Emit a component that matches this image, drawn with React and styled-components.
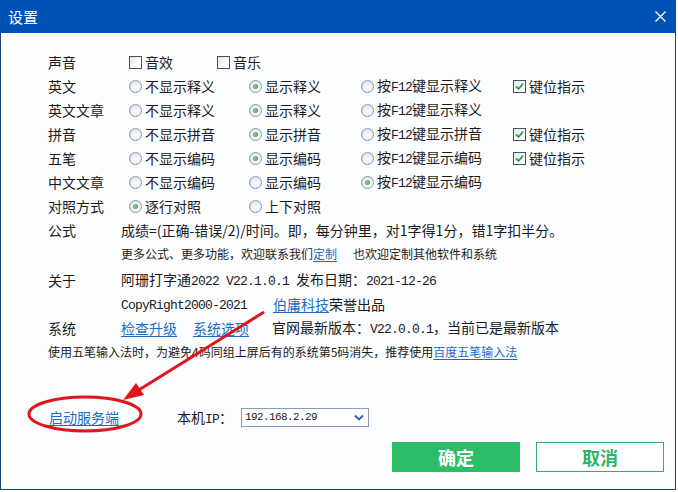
import React from "react";
import styled, { createGlobalStyle } from "styled-components";

const GlobalStyle = createGlobalStyle`
  html, body { margin: 0; padding: 0; background: #ffffff; }
  body { font-family: "Noto Sans CJK SC", "Noto Sans", sans-serif; color: #1b1b1b; }
  * { box-sizing: border-box; }
`;

const Window = styled.div`
  position: relative;
  width: 676px;
  height: 490px;
  border: 1px solid #1d416f;
  border-top: 0;
  background: #fcfdff;
  display: flex;
  flex-direction: column;
`;

const TitleBar = styled.div`
  height: 33px;
  margin: 0 -1px;
  background: #0051b5;
  color: #fff;
  display: flex;
  align-items: center;
  justify-content: space-between;
  padding: 0 10px 0 8px;
  font-size: 15px;
  flex: none;
`;

const Body = styled.div`
  flex: 1;
  padding: 17px 11px 19px 47px;
  display: flex;
  flex-direction: column;
  font-size: 14px;
`;

const Row = styled.div`
  display: flex;
  align-items: center;
  height: 24px;
  line-height: 24px;
  white-space: nowrap;
  margin-top: ${(p) => p.$mt || 0}px;
  font-size: ${(p) => p.$fs || 14}px;
`;

const Label = styled.div`
  width: 73px;
  flex: none;
`;

const Options = styled.div`
  display: flex;
  align-items: center;
  padding-left: 8px;
`;

const Option = styled.div`
  display: inline-flex;
  align-items: center;
  gap: 3px;
  width: ${(p) => (p.$w ? `${p.$w}px` : "auto")};
  flex: none;
`;

const RadioMark = styled.span`
  position: relative;
  width: 13px;
  height: 13px;
  border-radius: 50%;
  border: 1px solid #8496ab;
  background: radial-gradient(circle at 60% 65%, #ffffff 0%, #e9edf2 55%, #cfd7e0 100%);
  flex: none;
  &::after {
    content: "";
    display: ${(p) => (p.$on ? "block" : "none")};
    position: absolute;
    left: 3px;
    top: 3px;
    width: 5px;
    height: 5px;
    border-radius: 50%;
    background: radial-gradient(circle at 40% 40%, #8fd48f, #2f8f36);
  }
`;

const BoxMark = styled.span`
  width: 13px;
  height: 13px;
  border: 1px solid #3d5670;
  background: linear-gradient(135deg, #dfe4ea 0%, #ffffff 70%);
  flex: none;
  display: inline-flex;
  align-items: center;
  justify-content: center;
`;

const Mono = styled.span`
  font-family: "Liberation Mono", "DejaVu Sans Mono", monospace;
  font-size: ${(p) => p.$fs || 13}px;
  letter-spacing: ${(p) => p.$ls ?? -0.8}px;
`;

const Link = styled.span`
  color: #1a6cc4;
  text-decoration: underline;
  text-underline-offset: 2px;
  margin-left: ${(p) => p.$ml || 0}px;
`;

const Cell = styled.span`
  display: inline-block;
  width: ${(p) => p.$w}px;
  flex: none;
`;

const Gap = styled.span`
  display: inline-block;
  width: ${(p) => p.$w}px;
`;

const Footer = styled.div`
  display: flex;
  align-items: center;
  height: 24px;
  margin-top: 41px;
  padding-left: 1px;
  white-space: nowrap;
`;

const IpLabel = styled.span`
  width: 64px;
  flex: none;
`;

const Select = styled.div`
  width: 128px;
  height: 19px;
  border: 1px solid #7f9dbd;
  background: #fff;
  display: flex;
  align-items: center;
  justify-content: space-between;
  padding: 0 4px 0 3px;
`;

const Buttons = styled.div`
  display: flex;
  justify-content: flex-end;
  gap: 16px;
  margin-top: 13px;
`;

const Button = styled.div`
  width: 128px;
  height: 30px;
  display: flex;
  align-items: center;
  justify-content: center;
  font-size: 18px;
  font-weight: 700;
  background: ${(p) => (p.$primary ? "#2dbd69" : "#ffffff")};
  color: ${(p) => (p.$primary ? "#ffffff" : "#2db466")};
  border: 1px solid ${(p) => (p.$primary ? "#2dbd69" : "#3aa66a")};
`;

const Overlay = styled.svg`
  position: absolute;
  left: -1px;
  top: 0;
  pointer-events: none;
`;

const Radio = ({ on, w, children }) => (
  <Option $w={w}>
    <RadioMark $on={on} />
    <span>{children}</span>
  </Option>
);

const Check = ({ on, w, children }) => (
  <Option $w={w}>
    <BoxMark>
      {on && (
        <svg width="9" height="9" viewBox="0 0 9 9">
          <path d="M1 4.5 L3.5 7 L8 1.5" stroke="#2c9a34" strokeWidth="1.8" fill="none" />
        </svg>
      )}
    </BoxMark>
    <span>{children}</span>
  </Option>
);

const rows = [
  ["英文", ["不显示释义", "显示释义", "按F12键显示释义"], 1, true],
  ["英文文章", ["不显示释义", "显示释义", "按F12键显示释义"], 1, false],
  ["拼音", ["不显示拼音", "显示拼音", "按F12键显示拼音"], 1, true],
  ["五笔", ["不显示编码", "显示编码", "按F12键显示编码"], 1, true],
  ["中文文章", ["不显示编码", "显示编码", "按F12键显示编码"], 2, false],
];

const widths = [120, 112, 152];

export default function App() {
  return (
    <>
      <GlobalStyle />
      <Window>
        <TitleBar>
          <span>设置</span>
          <svg width="11" height="11" viewBox="0 0 11 11">
            <path d="M0.5 0.5 L10.5 10.5 M10.5 0.5 L0.5 10.5" stroke="#fff" strokeWidth="1.3" />
          </svg>
        </TitleBar>
        <Body>
          <Row>
            <Label>声音</Label>
            <Options>
              <Check w={88}>音效</Check>
              <Check>音乐</Check>
            </Options>
          </Row>
          {rows.map(([label, opts, sel, key]) => (
            <Row key={label}>
              <Label>{label}</Label>
              <Options>
                {opts.map((o, i) => (
                  <Radio key={i} on={i === sel} w={widths[i]}>
                    {o.startsWith("按F12") ? (
                      <>
                        按<Mono>F12</Mono>
                        {o.slice(4)}
                      </>
                    ) : (
                      o
                    )}
                  </Radio>
                ))}
                {key && <Check on>键位指示</Check>}
              </Options>
            </Row>
          ))}
          <Row>
            <Label>对照方式</Label>
            <Options>
              <Radio on w={120}>逐行对照</Radio>
              <Radio>上下对照</Radio>
            </Options>
          </Row>
          <Row>
            <Label>公式</Label>
            <span>成绩=(正确-错误/2)/时间。即，每分钟里，对1字得1分，错1字扣半分。</span>
          </Row>
          <Row $fs={12}>
            <Label />
            <span>更多公式、更多功能，欢迎联系我们</span>
            <Link>定制</Link>
            <Gap $w={16} />
            <span>也欢迎定制其他软件和系统</span>
          </Row>
          <Row $mt={2}>
            <Label>关于</Label>
            <span>
              阿珊打字通<Mono>2022 V22.1.0.1 </Mono>发布日期：<Mono>2021-12-26</Mono>
            </span>
          </Row>
          <Row>
            <Label />
            <Cell $w={152}>
              <Mono>CopyRight2000-2021</Mono>
            </Cell>
            <Link>伯庸科技</Link>
            <span>荣誉出品</span>
          </Row>
          <Row>
            <Label>系统</Label>
            <Link>检查升级</Link>
            <Link $ml={16}>系统选项</Link>
            <Gap $w={23} />
            <span>
              官网最新版本：<Mono>V22.0.0.1</Mono>，当前已是最新版本
            </span>
          </Row>
          <Row $fs={12}>
            <span>使用五笔输入法时，为避免4码同组上屏后有的系统第5码消失，推荐使用</span>
            <Link>百度五笔输入法</Link>
          </Row>
          <Footer>
            <Cell $w={128}>
              <Link>启动服务端</Link>
            </Cell>
            <IpLabel>
              本机<Mono>IP</Mono>：
            </IpLabel>
            <Select>
              <Mono $fs={11} $ls={-0.6}>192.168.2.29</Mono>
              <svg width="10" height="7" viewBox="0 0 10 7">
                <path d="M1 1.5 L5 5.5 L9 1.5" stroke="#2d5fa6" strokeWidth="1.8" fill="none" />
              </svg>
            </Select>
          </Footer>
          <Buttons>
            <Button $primary>确定</Button>
            <Button>取消</Button>
          </Buttons>
        </Body>
        <Overlay width="678" height="492" viewBox="0 0 678 492">
          <ellipse cx="85" cy="414" rx="56" ry="17" fill="none" stroke="#e3151c" strokeWidth="3" />
          <line x1="264" y1="312" x2="134" y2="393" stroke="#e3151c" strokeWidth="3" />
          <polygon points="123,400 144,395 136,383" fill="#e3151c" />
        </Overlay>
      </Window>
    </>
  );
}
